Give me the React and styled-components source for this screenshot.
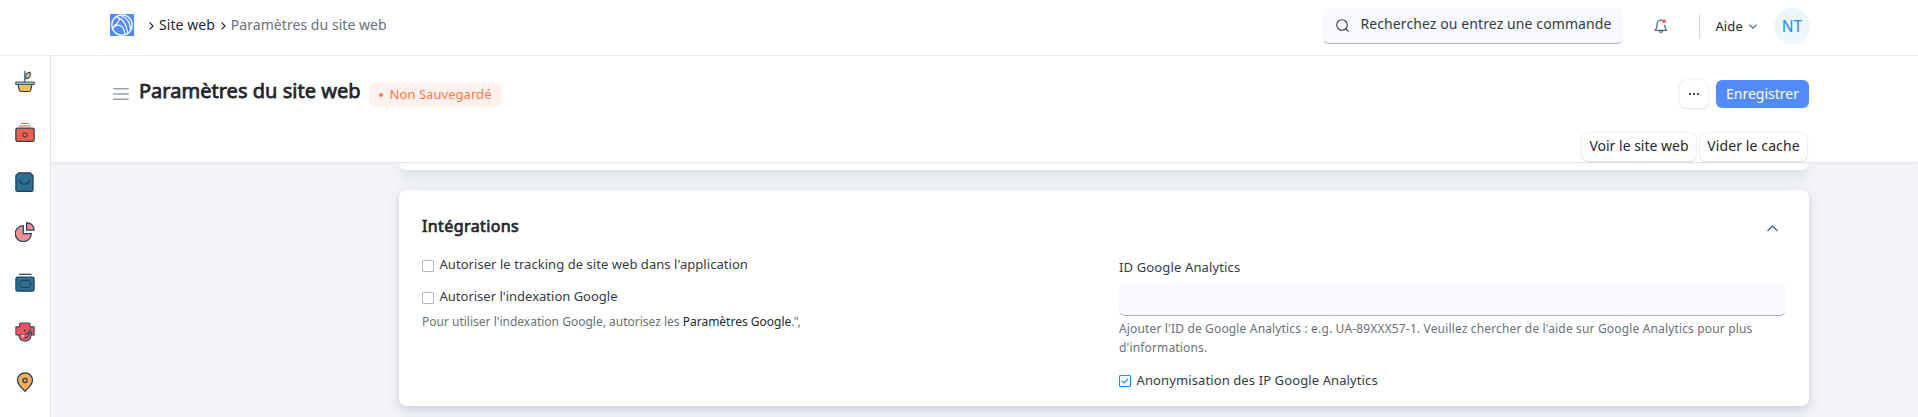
import React from 'react';
import styled, { createGlobalStyle } from 'styled-components';

const Global = createGlobalStyle`
  *, *::before, *::after { box-sizing: border-box; }
  body {
    margin: 0;
    overflow: hidden;
    background: #f3f5f9;
    color: #1f272e;
    font-family: "Noto Sans", "Open Sans", sans-serif;
    font-size: 14px;
    line-height: 20px;
  }
  svg { display: block; flex: none; }
`;

const Shell = styled.div`
  height: 417px;
  display: flex;
  flex-direction: column;
  overflow: hidden;
`;

const Navbar = styled.header`
  height: 56px;
  flex: none;
  display: flex;
  justify-content: space-between;
  padding: 8px 108px 0 110px;
  background: #fff;
  border-bottom: 1px solid #ebeef2;
`;

const Breadcrumbs = styled.nav`
  height: 36px;
  display: flex;
  align-items: center;
  padding-top: 1px;
`;

const Logo = styled.svg`
  width: 24px;
  height: 22px;
  margin: -4px 15px 0 0;
`;

const CrumbArrow = styled.svg`
  width: 5px;
  height: 8px;
  margin: -1px 5px 0 0;
`;

const Crumb = styled.span`
  height: 20px;
  margin: -3px 6px 0 0;
  letter-spacing: 0.05px;
  color: ${(p) => (p.$current ? '#687178' : '#1f272e')};
`;

const NavTools = styled.div`
  display: flex;
  align-items: center;
  height: 36px;
`;

const SearchBox = styled.div`
  width: 300px;
  height: 36px;
  display: flex;
  align-items: center;
  padding: 0 0 3px 13px;
  gap: 11px;
  background: #f8f9fe;
  border-bottom: 1px solid #a9b4be;
  border-radius: 6px;
  color: #333c44;
  letter-spacing: 0.1px;
  white-space: nowrap;
  svg { margin-top: 2px; }
`;

const BellButton = styled.div`
  margin: 0 31px 0 31px;
`;

const Divider = styled.div`
  width: 1px;
  height: 24px;
  background: #d1d5d9;
`;

const HelpMenu = styled.div`
  display: flex;
  align-items: center;
  gap: 6px;
  margin: -1px 17px 0 15px;
  font-size: 13px;
  letter-spacing: 0.15px;
  svg { margin-top: 1px; }
`;

const Avatar = styled.div`
  width: 36px;
  height: 36px;
  border-radius: 50%;
  display: flex;
  align-items: center;
  justify-content: center;
  padding-bottom: 1px;
  background: #ecf6fe;
  color: #1b8ff0;
  font-size: 15.5px;
`;

const Body = styled.div`
  flex: 1;
  min-height: 0;
  display: flex;
`;

const Sidebar = styled.aside`
  width: 51px;
  flex: none;
  padding-top: 1px;
  background: #fff;
  border-right: 1px solid #dfe5ee;
`;

const SidebarItem = styled.div`
  height: 50px;
  display: flex;
  align-items: center;
  justify-content: center;
`;

const Page = styled.div`
  flex: 1;
  min-width: 0;
`;

const PageHead = styled.div`
  position: relative;
  z-index: 1;
  height: 107px;
  padding: 24px 109px 0 62px;
  background: #fff;
  border-bottom: 1px solid #e5e8eb;
  box-shadow: 0 1px 3px rgba(40, 60, 80, 0.06);
`;

const TitleRow = styled.div`
  height: 28px;
  display: flex;
  align-items: center;
`;

const Title = styled.h1`
  margin: -7px 8px 0 10px;
  font-size: 20px;
  line-height: 28px;
  font-weight: 400;
  letter-spacing: 0.02px;
  -webkit-text-stroke: 0.75px #1f272e;
`;

const Badge = styled.span`
  width: 133px;
  height: 24px;
  display: flex;
  align-items: center;
  gap: 7px;
  margin-top: 2px;
  padding: 0 10px 3px;
  border-radius: 6px;
  background: #fff2ee;
  color: #ff7846;
  font-size: 13px;
  line-height: 18px;
  letter-spacing: 0.05px;
  white-space: nowrap;
  &::before {
    content: '';
    width: 4px;
    height: 4px;
    margin-top: 3px;
    border-radius: 50%;
    background: currentColor;
  }
`;

const Actions = styled.div`
  display: flex;
  gap: 8px;
  margin-left: auto;
`;

const Button = styled.button`
  height: 28px;
  width: ${(p) => p.$width}px;
  padding: 0 0 ${(p) => p.$lift || 1}px;
  display: flex;
  align-items: center;
  justify-content: center;
  border: 0;
  border-radius: 6px;
  background: ${(p) => (p.$primary ? '#528bfb' : '#fff')};
  color: ${(p) => (p.$primary ? '#fff' : '#1f272e')};
  font: inherit;
  letter-spacing: ${(p) => p.$spacing || '0'};
  white-space: nowrap;
  box-shadow: ${(p) => (p.$primary ? 'none' : '0 0 2px rgba(25, 39, 52, 0.16), 0 1px 2px rgba(25, 39, 52, 0.1)')};
`;

const SecondaryActions = styled.div`
  display: flex;
  justify-content: flex-end;
  gap: 4px;
  padding: 25px 2px 0 0;
`;

const Content = styled.main`
  display: flex;
  flex-direction: column;
  gap: 20px;
  padding: 0 109px 0 348px;
`;

const Card = styled.section`
  height: ${(p) => p.$height}px;
  background: #fff;
  border-radius: ${(p) => (p.$tail ? '0 0 8px 8px' : '8px')};
  padding: ${(p) => (p.$tail ? '0' : '24px 23px 0')};
  box-shadow: 0 6px 14px rgba(60, 80, 100, 0.17), 0 1px 6px rgba(60, 80, 100, 0.08);
`;

const SectionHead = styled.div`
  height: 41px;
  display: flex;
  justify-content: space-between;
  padding-right: 8px;
  svg { margin-top: 11px; }
`;

const SectionTitle = styled.h2`
  margin: 0;
  font-size: 16px;
  line-height: 24px;
  font-weight: 400;
  letter-spacing: 0.4px;
  -webkit-text-stroke: 0.7px #1f272e;
`;

const Columns = styled.div`
  display: grid;
  grid-template-columns: 697px 667px;
`;

const CheckRow = styled.label`
  height: ${(p) => p.$height}px;
  display: flex;
  align-items: flex-start;
  gap: 5.5px;
  color: #333c44;
  font-size: 13px;
  line-height: 18px;
  letter-spacing: ${(p) => p.$spacing || '0.05px'};
`;

const Check = styled.span`
  width: 12px;
  height: 12px;
  flex: none;
  display: flex;
  align-items: center;
  justify-content: center;
  margin-top: ${(p) => (p.$checked ? 4 : 5)}px;
  border: 1px solid ${(p) => (p.$checked ? '#1b8ff0' : '#b3bdc7')};
  border-radius: 1px;
  background: ${(p) => (p.$checked ? '#f1f8fe' : '#fff')};
`;

const Field = styled.div`
  padding-top: 3px;
`;

const FieldLabel = styled.div`
  height: 25px;
  color: #333c44;
  font-size: 13px;
  line-height: 18px;
  letter-spacing: 0.14px;
`;

const Input = styled.div`
  height: 33px;
  background: #f8f9fe;
  border-bottom: 1px solid #a9b4be;
  border-radius: 6px;
`;

const HelpText = styled.p`
  margin: ${(p) => p.$margin};
  color: #687178;
  font-size: 12px;
  line-height: 19px;
  letter-spacing: ${(p) => p.$spacing || '0'};
`;

const HelpLink = styled.a`
  color: #1f272e;
`;

const Tight = styled.span`
  letter-spacing: -0.9px;
`;

const ink = '#1d4260';

const PlantIcon = () => (
  <svg width="20" height="20" viewBox="0 0 20 20" overflow="visible" fill="none" stroke="#355d7c" strokeWidth="1.2">
    <path d="M9.8 10.5V-1" />
    <path d="M10.8 6.8V3.6Q10.8.6 15.3.3Q15.8 6.4 11.6 6.6Z" fill="#ffbd4f" />
    <path d="M3 12.2h14l-1.3 5.8q-.3 1.5-1.8 1.5H6.1q-1.5 0-1.8-1.5Z" fill="#ffbd4f" stroke={ink} />
    <rect x=".8" y="10" width="18.4" height="2.5" rx=".6" fill="#e8ad50" />
  </svg>
);

const CashIcon = () => (
  <svg width="20" height="20" viewBox="0 0 20 20" fill="none">
    <path d="M6 1.4h8" stroke="#e9604a" strokeWidth="1" />
    <path d="M4 3.9h12" stroke="#f4a596" strokeWidth="1.8" />
    <rect x=".9" y="6.2" width="18.2" height="13.1" rx="1.6" fill="#ef6047" stroke={ink} strokeWidth="1.3" />
    <circle cx="10" cy="12.9" r="2.1" stroke="#5d4254" strokeWidth="1.3" />
  </svg>
);

const BagIcon = () => (
  <svg width="20" height="20" viewBox="0 0 20 20" fill="none" stroke={ink} strokeWidth="1.3">
    <path d="M3.8.8h11.3l2.9 2.8v14.1q0 1.6-1.6 1.6H2.5q-1.6 0-1.6-1.6V3.6Z" fill="#2f6e91" />
    <path d="M4.6 7.4q0 4.7 4.8 4.7t4.8-4.7" />
  </svg>
);

const PieIcon = () => (
  <svg width="20" height="20" viewBox="0 0 20 20" fill="#f28e90" stroke={ink} strokeWidth="1.2">
    <path d="M8.3 3.6v8.1h8a8 8 0 1 1-8-8.1Z" />
    <path d="M11.6.8q7.2.3 7.5 7.3h-7.5Z" />
  </svg>
);

const WalletIcon = () => (
  <svg width="20" height="20" viewBox="0 0 20 20" fill="none" stroke={ink} strokeWidth="1.2">
    <path d="M4 2.3h12.5" />
    <rect x=".9" y="5.2" width="18.2" height="14" rx="1.8" fill="#2f6e91" />
    <path d="M5.9 8.5h8.2l2 3.5-2 3.5H5.9l-2-3.5Z" strokeWidth="1" />
  </svg>
);

const MaskIcon = () => (
  <svg width="20" height="20" viewBox="0 0 20 20" fill="#f4545f" stroke="#24506f" strokeWidth="1.1">
    <path d="M3.8 10v3.5q.7 5.6 6.2 5.6t6-5.6V10Z" />
    <path d="M.9 4.9h3.6V2.4q0-1.4 1.4-1.4h7.7Q15 1 15 2.4v2.5h4.1v8h-2.6V10H14l-4 3H2Q.9 13 .9 12Z" />
    <path d="M5.8 13.2h4.1l-1.6 2Z" fill="#fff" stroke="none" />
    <path d="M8.8 15.8q4.9.2 4.9-3.8V9.5l2-2.6" fill="none" />
    <circle cx="9.7" cy="8.5" r="1" fill={ink} stroke="none" />
  </svg>
);

const PinIcon = () => (
  <svg width="20" height="20" viewBox="0 0 20 20" fill="#f9ae58" stroke={ink} strokeWidth="1.3">
    <path d="M10 19.2Q2.5 12.8 2.5 8.1a7.5 7.3 0 0 1 15 0Q17.5 12.8 10 19.2Z" />
    <circle cx="10" cy="8.4" r="2.1" />
  </svg>
);

const BellIcon = () => (
  <svg width="14" height="14" viewBox="0 0 14 14" fill="none" stroke="#456781" strokeWidth="1.2">
    <path d="M8.2 1.1H6.8A4 4 0 0 0 3 5.2v2.6L1.2 11.4h11.3L10.9 8V6" strokeLinejoin="round" strokeLinecap="round" />
    <path d="M5.2 11.8q.3 1.5 1.7 1.5t1.7-1.5" />
    <circle cx="10" cy="2.3" r="1.8" fill="#ff4b4f" stroke="none" />
  </svg>
);

const Arrow = () => (
  <CrumbArrow viewBox="0 0 5 8" fill="none" stroke="#1f272e" strokeWidth="1.2">
    <path d="M.7.6 4 4 .7 7.4" />
  </CrumbArrow>
);

const sidebarIcons = [PlantIcon, CashIcon, BagIcon, PieIcon, WalletIcon, MaskIcon, PinIcon];

export default function App() {
  return (
    <Shell>
      <Global />
      <Navbar>
        <Breadcrumbs>
          <Logo viewBox="0 0 24 22" fill="none" stroke="#fff" strokeWidth="1.2">
            <rect width="24" height="22" fill="#528bfb" stroke="none" />
            <circle cx="12" cy="11" r="10.2" />
            <path d="M6.5 2.6Q16.5 6.5 17.8 19.2" />
            <path d="M11 1.5Q20 5 20.8 16" />
            <path d="M2.5 14.5Q5 10.8 9 11.2Q14 12 15 20.5" />
            <path d="M9.5 3.8Q9.5 8.5 4 12" />
          </Logo>
          <Arrow />
          <Crumb>Site web</Crumb>
          <Arrow />
          <Crumb $current>Paramètres du site web</Crumb>
        </Breadcrumbs>
        <NavTools>
          <SearchBox>
            <svg width="13" height="13" viewBox="0 0 13 13" fill="none" stroke="#333c44" strokeWidth="1.1" strokeLinecap="round">
              <circle cx="6" cy="6" r="5.3" />
              <path d="m9.9 9.9 2.4 2.4" />
            </svg>
            Recherchez ou entrez une commande
          </SearchBox>
          <BellButton><BellIcon /></BellButton>
          <Divider />
          <HelpMenu>
            Aide
            <svg width="8" height="5" viewBox="0 0 8 5" fill="none" stroke="#456781" strokeWidth="1.2">
              <path d="m.5.7 3.5 3.5L7.5.7" />
            </svg>
          </HelpMenu>
          <Avatar>NT</Avatar>
        </NavTools>
      </Navbar>
      <Body>
        <Sidebar>
          {sidebarIcons.map((Icon, i) => (
            <SidebarItem key={i}><Icon /></SidebarItem>
          ))}
        </Sidebar>
        <Page>
          <PageHead>
            <TitleRow>
              <svg width="16" height="12" viewBox="0 0 16 12" stroke="#98a1a9" strokeWidth="1.6" strokeLinecap="round">
                <path d="M.8.8h14.4M.8 6h14.4M.8 11.2h14.4" />
              </svg>
              <Title>Paramètres du site web</Title>
              <Badge>Non Sauvegardé</Badge>
              <Actions>
                <Button $width={28} aria-label="Menu">
                  <svg width="10" height="2" viewBox="0 0 10 2" fill="#2c4a63">
                    <rect width="2" height="2" rx=".3" />
                    <rect x="4" width="2" height="2" rx=".3" />
                    <rect x="8" width="2" height="2" rx=".3" />
                  </svg>
                </Button>
                <Button $primary $width={93}>Enregistrer</Button>
              </Actions>
            </TitleRow>
            <SecondaryActions>
              <Button $width={114} $lift={2}>Voir le site web</Button>
              <Button $width={107} $lift={2} $spacing="0.1px">Vider le cache</Button>
            </SecondaryActions>
          </PageHead>
          <Content>
            <Card $tail $height={7} />
            <Card $height={216}>
              <SectionHead>
                <SectionTitle>Intégrations</SectionTitle>
                <svg width="11" height="7" viewBox="0 0 11 7" fill="none" stroke="#456781" strokeWidth="1.3">
                  <path d="m.5 6 5-5 5 5" />
                </svg>
              </SectionHead>
              <Columns>
                <div>
                  <CheckRow $height={32}><Check />Autoriser le tracking de site web dans l'application</CheckRow>
                  <CheckRow $height={25} $spacing="0"><Check />Autoriser l'indexation Google</CheckRow>
                  <HelpText $margin="0">
                    Pour utiliser l'indexation Google, autorisez les <HelpLink>Paramètres Google</HelpLink><Tight>.",</Tight>
                  </HelpText>
                </div>
                <Field>
                  <FieldLabel>ID Google Analytics</FieldLabel>
                  <Input />
                  <HelpText $margin="3px 0 14px" $spacing="0.155px">
                    Ajouter l'ID de Google Analytics : e.g. UA-89XXX57-1. Veuillez chercher de l'aide sur Google Analytics pour plus d'informations.
                  </HelpText>
                  <CheckRow $height={18} $spacing="0.11px">
                    <Check $checked>
                      <svg width="8" height="6" viewBox="0 0 8 6" fill="none" stroke="#2d8fe0" strokeWidth="1.2">
                        <path d="m1 3 2 2 4-4" />
                      </svg>
                    </Check>
                    Anonymisation des IP Google Analytics
                  </CheckRow>
                </Field>
              </Columns>
            </Card>
          </Content>
        </Page>
      </Body>
    </Shell>
  );
}
